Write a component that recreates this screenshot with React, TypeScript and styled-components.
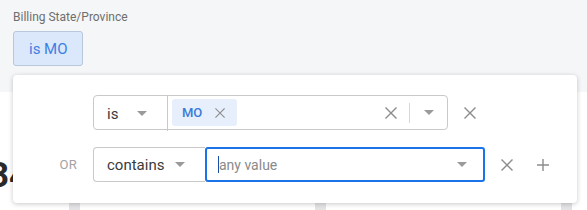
import React from 'react';
import styled, { createGlobalStyle } from 'styled-components';

const GlobalStyle = createGlobalStyle`
  html, body {
    margin: 0;
    padding: 0;
    background: #ffffff;
    font-family: Roboto, "Liberation Sans", Arial, sans-serif;
    overflow: hidden;
  }
  * { box-sizing: border-box; }
`;

const XIcon: React.FC<{ size?: number; color?: string }> = ({ size = 12, color = '#8c8c8c' }) => (
  <svg width={size} height={size} viewBox="0 0 12 12" fill="none">
    <path d="M1 1 L11 11 M11 1 L1 11" stroke={color} strokeWidth="1.4" strokeLinecap="square" />
  </svg>
);

const PlusIcon: React.FC = () => (
  <svg width={12} height={12} viewBox="0 0 12 12" fill="none">
    <path d="M6 0 V12 M0 6 H12" stroke="#8c8c8c" strokeWidth="1.4" />
  </svg>
);

const Caret: React.FC = () => (
  <svg width={10} height={5} viewBox="0 0 10 5">
    <path d="M0 0 H10 L5 5 Z" fill="#9a9a9a" />
  </svg>
);

const App: React.FC = () => {
  return (
    <Page>
      <GlobalStyle />
      <FilterBar>
        <FieldLabel>Billing State/Province</FieldLabel>
        <FilterChip>is MO</FilterChip>
      </FilterBar>

      <Dashboard>
        <CardRow>
          <Card $width={69}>
            <KpiValue>34</KpiValue>
          </Card>
          <Card $width={235} />
          <Card $width={235} />
          <Card $width={40} />
        </CardRow>
      </Dashboard>

      <Popover>
        <ConditionRow>
          <Connector />
          <Combo>
            <OperatorSelect $width={74}>
              <span>is</span>
              <Caret />
            </OperatorSelect>
            <TagField>
              <Tag>
                MO
                <TagRemove><XIcon size={10} color="#8f8f8f" /></TagRemove>
              </Tag>
              <FieldActions>
                <ClearButton><XIcon /></ClearButton>
                <Divider />
                <CaretButton><Caret /></CaretButton>
              </FieldActions>
            </TagField>
          </Combo>
          <IconButton><XIcon /></IconButton>
        </ConditionRow>

        <ConditionRow>
          <Connector>OR</Connector>
          <OperatorSelect $width={112} $bordered>
            <span>contains</span>
            <Caret />
          </OperatorSelect>
          <TextInput>
            <Cursor />
            <Placeholder>any value</Placeholder>
            <InputCaret><Caret /></InputCaret>
          </TextInput>
          <IconButton><XIcon /></IconButton>
          <IconButton><PlusIcon /></IconButton>
        </ConditionRow>
      </Popover>
    </Page>
  );
};

const Page = styled.div`
  position: relative;
  width: 587px;
  height: 210px;
  overflow: hidden;
`;

const FilterBar = styled.div`
  height: 92px;
  background: #f5f6f7;
  padding: 10px 13px 0;
  display: flex;
  flex-direction: column;
  align-items: flex-start;
`;

const FieldLabel = styled.div`
  font-size: 12px;
  line-height: 14px;
  color: #6e6e6e;
`;

const FilterChip = styled.div`
  margin-top: 7px;
  height: 35px;
  padding: 0 14px 0 15px;
  display: flex;
  align-items: center;
  background: #dbe7fa;
  border: 1px solid #b8c7dc;
  border-radius: 3px;
  color: #3d7fe3;
  font-size: 15px;
`;

const Dashboard = styled.div`
  background: #ffffff;
  padding-top: 8px;
`;

const CardRow = styled.div`
  display: flex;
  gap: 11px;
  background: #e3e4e6;
  height: 120px;
`;

const Card = styled.div<{ $width: number }>`
  flex: 0 0 ${({ $width }) => $width}px;
  background: #ffffff;
  padding-top: 58px;
`;

const KpiValue = styled.div`
  margin-left: -11px;
  font-size: 35px;
  font-weight: 700;
  line-height: 36px;
  color: #2a2a2a;
`;

const Popover = styled.div`
  position: absolute;
  top: 75px;
  left: 13px;
  width: 564px;
  height: 128px;
  background: #ffffff;
  border-radius: 4px;
  box-shadow: 0 1px 5px rgba(0, 0, 0, 0.22);
  padding-top: 20px;
  display: flex;
  flex-direction: column;
  gap: 17px;
`;

const ConditionRow = styled.div`
  display: flex;
  align-items: center;
  height: 35px;
`;

const Connector = styled.div`
  flex: 0 0 80px;
  text-align: right;
  padding-right: 16px;
  font-size: 13px;
  color: #a3a3a3;
  letter-spacing: 0.3px;
`;

const Combo = styled.div`
  display: flex;
  height: 35px;
  border: 1px solid #c9c9c9;
  border-radius: 4px;
`;

const OperatorSelect = styled.div<{ $width: number; $bordered?: boolean }>`
  flex: 0 0 ${({ $width }) => $width}px;
  height: 35px;
  display: flex;
  align-items: center;
  justify-content: space-between;
  padding: 0 20px 0 13px;
  font-size: 15px;
  color: #3a3a3a;
  border-right: 1px solid #c9c9c9;
  ${({ $bordered }) =>
    $bordered &&
    `
    border: 1px solid #c9c9c9;
    border-right: none;
    border-radius: 4px 0 0 4px;
  `}
`;

const TagField = styled.div`
  width: 279px;
  display: flex;
  align-items: center;
  justify-content: space-between;
  padding-left: 4px;
`;

const Tag = styled.div`
  height: 27px;
  width: 65px;
  display: flex;
  align-items: center;
  gap: 13px;
  padding-left: 10px;
  background: #e6effb;
  border-radius: 3px;
  color: #3a7bd8;
  font-size: 13px;
  font-weight: 500;
`;

const TagRemove = styled.span`
  display: flex;
  align-items: center;
`;

const FieldActions = styled.div`
  display: flex;
  align-items: center;
  height: 100%;
`;

const ClearButton = styled.div`
  width: 36px;
  display: flex;
  justify-content: center;
`;

const Divider = styled.div`
  width: 1px;
  height: 20px;
  background: #d6d6d6;
`;

const CaretButton = styled.div`
  width: 37px;
  display: flex;
  justify-content: center;
`;

const TextInput = styled.div`
  position: relative;
  flex: 0 0 280px;
  height: 35px;
  border: 2px solid #1a73e8;
  border-radius: 3px;
  display: flex;
  align-items: center;
  padding: 0 16px 0 11px;
`;

const Cursor = styled.div`
  width: 1px;
  height: 17px;
  background: #1a4fa8;
`;

const Placeholder = styled.span`
  flex: 1;
  font-size: 14px;
  color: #8a8a8a;
`;

const InputCaret = styled.span`
  display: flex;
  align-items: center;
`;

const IconButton = styled.div`
  width: 28px;
  height: 28px;
  margin-left: 8px;
  display: flex;
  align-items: center;
  justify-content: center;
`;

export default App;
